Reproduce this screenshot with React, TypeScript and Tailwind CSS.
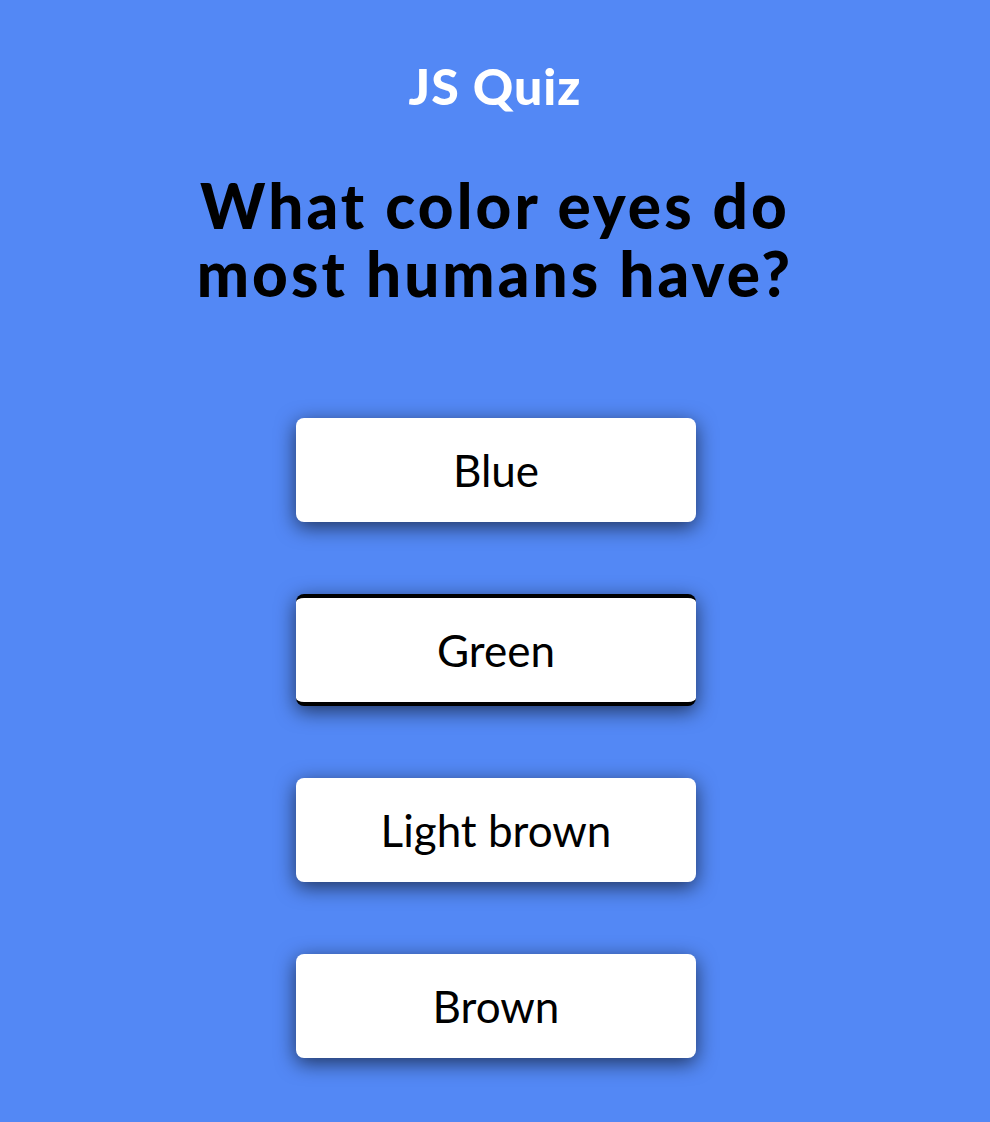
import React from "react";

const answers = ["Blue", "Green", "Light brown", "Brown"];

export default function App() {
  return (
    <div
      className="min-h-[1122px] w-full bg-[#5388f5] flex flex-col items-center"
      style={{ fontFamily: '"Lato", "Open Sans", sans-serif' }}
    >
      <h1 className="mt-[56px] text-[50px] leading-[60px] font-black tracking-[0.02em] text-white">JS Quiz</h1>
      <h2 className="mt-[55px] w-[720px] text-center text-[62px] leading-[68px] font-black tracking-[0.05em] text-black">
        What color eyes do most humans have?
      </h2>
      <div className="mt-[111px] pl-[2px] flex flex-col items-center gap-[72px]">
        {answers.map((a) => (
          <button
            key={a}
            className={
              "w-[400px] rounded-lg bg-white text-[44px] text-black shadow-[0_5px_20px_rgba(0,0,0,0.62)] flex items-center justify-center " +
              (a === "Green" ? "h-[112px] border-y-4 border-black" : "h-[104px]")
            }
          >
            {a}
          </button>
        ))}
      </div>
    </div>
  );
}
